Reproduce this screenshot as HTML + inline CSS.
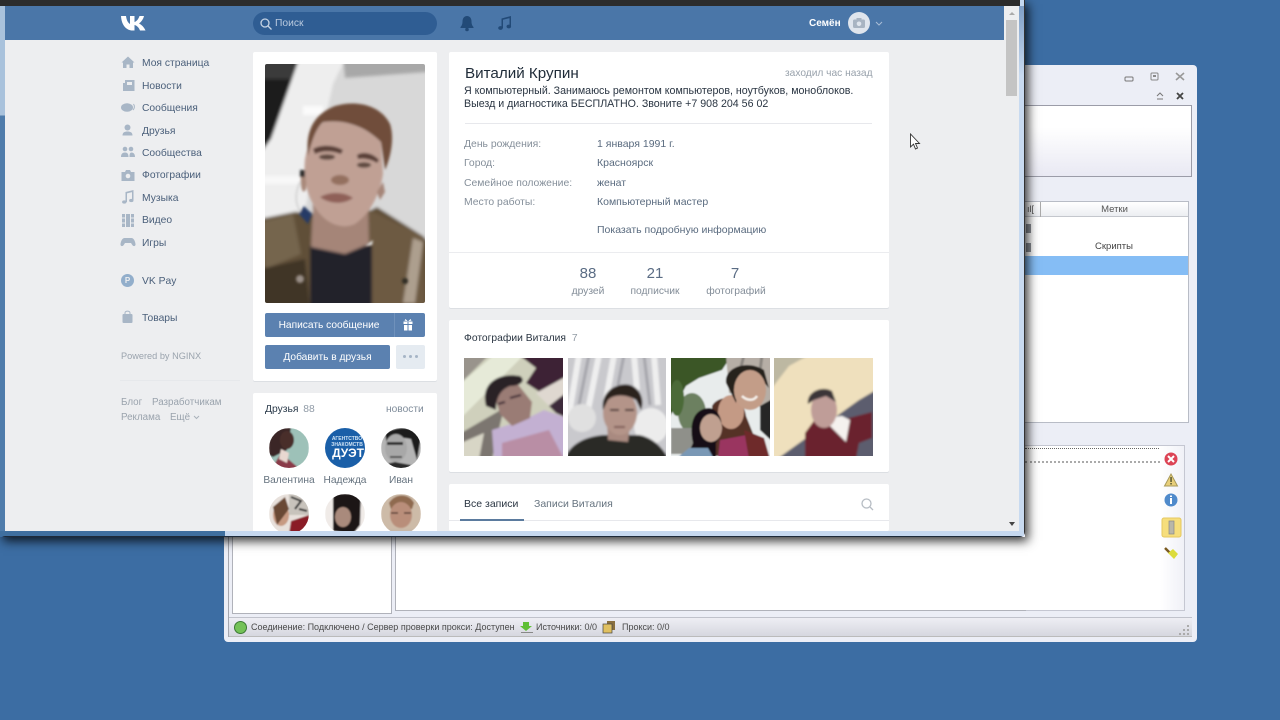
<!DOCTYPE html>
<html><head><meta charset="utf-8">
<style>
html,body{margin:0;padding:0;width:1280px;height:720px;overflow:hidden;background:#3c6da3;font-family:"Liberation Sans","Noto Sans CJK SC",sans-serif}
div,span,svg{position:absolute;white-space:nowrap;box-sizing:border-box}
.t{font-size:10.65px;line-height:14px}
.nav{left:142px;color:#4a5f7a;font-size:10.3px;line-height:14px}
.lab{left:464px;color:#858f9a;font-size:10.4px;line-height:14px}
.val{left:597px;color:#5a6b7f;font-size:10.5px;line-height:14px}
.card{background:#fff;border-radius:2px;box-shadow:0 1px 0 #dcdfe3}
.fn{color:#66737f;font-size:10.2px;line-height:14px;text-align:center}
.cnt{color:#5a6c84;font-size:15px;line-height:18px;text-align:center}
.cl{color:#838d98;font-size:10.3px;line-height:14px;text-align:center}
.g{color:#9aa3ad;font-size:9.8px;line-height:13px}
.s{font-size:9px;line-height:14px;color:#4a4a4a}
</style></head><body>

<!-- back window -->
<div style="left:224px;top:65px;width:973px;height:577px;background:#eceef6;border-radius:4px"></div>
<div style="left:1025px;top:105px;width:167px;height:72px;background:linear-gradient(#fff,#fff 30%,#e9e9f3);border:1px solid #9b9ca8;border-left:0"></div>
<div style="left:1025px;top:201px;width:164px;height:222px;background:#fff;border:1px solid #b8bcc6;border-left:0"></div>
<div style="left:1025px;top:202px;width:163px;height:15px;background:linear-gradient(#fff,#eceef2);border-bottom:1px solid #c4c7cd"></div>
<div style="left:1040px;top:202px;width:1px;height:15px;background:#aaa"></div>
<div style="left:1027px;top:204px;width:10px;height:10px;color:#555;font-size:9px;line-height:10px">ıl[</div>
<div style="left:1041px;top:203px;width:147px;height:15px;text-align:center;color:#555;font-size:9.5px;line-height:14px">Метки</div>
<div style="left:1026px;top:224px;width:5px;height:9px;background:#8b8f96"></div>
<div style="left:1026px;top:243px;width:5px;height:9px;background:#8b8f96"></div>
<div style="left:1040px;top:240px;width:148px;height:13px;text-align:center;color:#444;font-size:9.5px;line-height:13px">Скрипты</div>
<div style="left:1025px;top:256px;width:163px;height:19px;background:#85bdf5"></div>
<svg style="left:1120px;top:68px" width="70" height="36" viewBox="0 0 70 36" fill="none">
<rect x="5" y="9" width="8" height="4" rx="1" stroke="#777"/>
<rect x="31" y="5" width="7" height="7" rx="1" stroke="#888"/><rect x="33" y="7" width="3" height="2" fill="#888"/>
<path d="M56 5l8 7M64 5l-8 7" stroke="#999" stroke-width="1.6"/>
<path d="M37 28l3-3 3 3M37 31h6" stroke="#777"/>
<path d="M57 25l6 6M63 25l-6 6" stroke="#444" stroke-width="1.8"/>
</svg>

<!-- lower panels -->
<div style="left:1025px;top:445px;width:160px;height:166px;background:#fff;border:1px solid #c5c7d2;border-left:0"></div>
<div style="left:1025px;top:448px;width:134px;height:1px;border-top:1px dotted #666"></div>
<div style="left:1025px;top:461px;width:135px;height:2px;border-top:2px dotted #aaa"></div>
<div style="left:1160px;top:446px;width:24px;height:164px;background:linear-gradient(90deg,#fff,#f0f1f7)"></div>
<svg style="left:1158px;top:448px" width="28" height="120" viewBox="0 0 28 120">
<circle cx="13" cy="11" r="6.5" fill="#dc4455"/><path d="M10 8l6 6M16 8l-6 6" stroke="#fff" stroke-width="2"/>
<path d="M13 26l6.5 12h-13z" fill="#e8cf7a" stroke="#a89a5a"/><rect x="12.300" y="29" width="1.5" height="5" fill="#553"/><rect x="12.300" y="35" width="1.5" height="1.5" fill="#553"/>
<circle cx="13" cy="52" r="6.5" fill="#4f8acb"/><rect x="12" y="50" width="2" height="6" fill="#fff"/><rect x="12" y="47.5" width="2" height="1.5" fill="#fff"/>
<rect x="4" y="70" width="19" height="19" rx="2" fill="#f6de7c" stroke="#e5c860"/><rect x="11" y="73" width="5" height="13" fill="#b9b7a9" stroke="#888" stroke-width=".7"/>
<path d="M7 100l5 5" stroke="#7a5a20" stroke-width="2.5"/><path d="M10 105l5-4 5 5-4 5z" fill="#dcdc3c"/>
</svg>
<div style="left:232px;top:537px;width:160px;height:77px;background:#fff;border:1px solid #b0b2ba;border-top:0"></div>
<div style="left:395px;top:537px;width:631px;height:74px;background:#fff;border-left:1px solid #b0b2ba;border-bottom:1px solid #b0b2ba"></div>
<!-- status bar -->
<div style="left:228px;top:617px;width:964px;height:20px;background:linear-gradient(#eeeef4,#d6d7df);border-top:1px solid #c0c2cb;border-bottom:1px solid #bbb"></div>
<div style="left:228px;top:537px;width:1px;height:100px;background:#a5a7af"></div>
<svg style="left:233px;top:620px" width="390" height="15" viewBox="0 0 390 15">
<circle cx="7.5" cy="7.5" r="6" fill="#74c257" stroke="#3d7a35"/>
<path d="M290 2h6v4h3l-6 5-6-5h3z" fill="#5fbf35"/><rect x="288" y="12" width="12" height="1" fill="#888"/>
<rect x="378" y="1" width="8" height="9" fill="#8a7040" transform="translate(-4 0)"/><rect x="374" y="4" width="9" height="9" fill="#e0c060" stroke="#444" stroke-width=".7" transform="translate(-4 0)"/>
</svg>
<svg style="left:1178px;top:624px" width="13" height="12" viewBox="0 0 13 12" fill="#aaa"><rect x="9" y="1" width="2" height="2"/><rect x="9" y="5" width="2" height="2"/><rect x="9" y="9" width="2" height="2"/><rect x="5" y="5" width="2" height="2"/><rect x="5" y="9" width="2" height="2"/><rect x="1" y="9" width="2" height="2"/></svg>
<div class="s" style="left:251px;top:620px">Соединение: Подключено / Сервер проверки прокси: Доступен</div>
<div class="s" style="left:536px;top:620px">Источники: 0/0</div>
<div class="s" style="left:622px;top:620px">Прокси: 0/0</div>

<!-- front window shadow -->
<div style="left:0;top:0;width:1025px;height:537px;box-shadow:3px 4px 10px rgba(0,0,0,.8)"></div>

<!-- front window frame -->
<div style="left:0;top:0;width:1025px;height:537px;background:#c5d9f1;border-radius:0 0 5px 5px;border-bottom:1px solid #1d2a3a;border-right:1px solid #333"></div>
<div style="left:0;top:0;width:5px;height:531px;background:linear-gradient(#a9c2dc,#a9c2dc 115px,#4f7cab 116px)"></div>
<div style="left:0;top:531px;width:225px;height:5px;background:#3f6f9f"></div>
<div style="left:225px;top:531px;width:799px;height:5px;background:#c6d8ef"></div>
<div style="left:0;top:0;width:1020px;height:6px;background:#2c2c2c"></div>

<!-- page -->
<div style="left:5px;top:6px;width:1014px;height:525px;background:#edeef0"></div>
<div style="left:5px;top:6px;width:999px;height:34px;background:#4a76a8"></div>
<!-- scrollbar -->
<div style="left:1006px;top:20px;width:11px;height:76px;background:#c4c4c4"></div>
<svg style="left:1006px;top:9px" width="11" height="520" viewBox="0 0 11 520"><path d="M3 6l3-3 3 3z" fill="#aaa"/><path d="M3 513h6l-3 4z" fill="#444"/></svg>
<div style="left:1019px;top:6px;width:5px;height:525px;background:linear-gradient(#7f9fc6,#c8daf0 70px)"></div>

<!-- header -->
<svg style="left:120px;top:15px" width="28" height="16" viewBox="0 0 28 16"><path d="M1 1h5c.5 4 2 7 4 8V1h4.500v6c2-.5 4-3 5-6H24c-.8 3.500-3 6-5 7.500 2.500 1.200 5 3.500 6.500 7H20c-1-2.800-3.200-5-5.500-5.500V15.500H13C6 15.500 1.500 10 1 1z" fill="#fff"/></svg>
<div style="left:253px;top:12px;width:184px;height:23px;border-radius:12px;background:#2f5d93"></div>
<svg style="left:259px;top:17px" width="14" height="14" viewBox="0 0 14 14" fill="none"><circle cx="6" cy="6" r="4" stroke="#c5d3e4" stroke-width="1.3"/><path d="M9 9l3.500 3.500" stroke="#c5d3e4" stroke-width="1.3"/></svg>
<div class="t" style="left:275px;top:17px;color:#b9cadf;font-size:10.3px">Поиск</div>
<svg style="left:458px;top:14px" width="18" height="18" viewBox="0 0 18 18"><path d="M9 2c3 0 4.500 2.500 4.500 5.500 0 3 1 4.500 2 5.500v1H2.500v-1c1-1 2-2.500 2-5.500C4.500 4.500 6 2 9 2z" fill="#224a77"/><circle cx="9" cy="15.500" r="1.800" fill="#224a77"/></svg>
<svg style="left:496px;top:14px" width="18" height="18" viewBox="0 0 18 18" fill="#224a77"><path d="M5.500 4.500L15 2v1.800l-8 2V14H5.500zM13.500 3h1.500v9.500h-1.500z"/><ellipse cx="4.500" cy="14" rx="2.300" ry="1.900"/><ellipse cx="12.800" cy="12.500" rx="2.300" ry="1.900"/></svg>
<div class="t" style="left:809px;top:17px;color:#fff;font-weight:bold;font-size:10px">Семён</div>
<div style="left:848px;top:12px;width:22px;height:22px;border-radius:50%;background:#dfe5ed"></div>
<svg style="left:852px;top:17px" width="14" height="12" viewBox="0 0 14 12"><rect x="1" y="2.500" width="12" height="8.500" rx="1.500" fill="#a8b4c2"/><rect x="4.500" y="1" width="5" height="2" fill="#a8b4c2"/><circle cx="7" cy="6.800" r="2.300" fill="#dfe5ed"/></svg>
<svg style="left:875px;top:21px" width="8" height="6" viewBox="0 0 8 6" fill="none"><path d="M1 1l3 3 3-3" stroke="#a9bdd6"/></svg>

<!-- sidebar -->
<svg style="left:120px;top:55px" width="16" height="200" viewBox="0 0 16 200" fill="#a8b6c6">
<path d="M8 1.500L14.500 7.500H13V13H9.500V9.500h-3V13H3V7.500H1.500z"/>
<path d="M5 25h9.500v11H3v-8h2z"/><rect x="7" y="27" width="5" height="3" fill="#edeef0"/>
<ellipse cx="7" cy="52.500" rx="6" ry="4.300"/><path d="M13.500 49c1.500 2 1 4.500-.5 6" fill="none" stroke="#a8b6c6"/>
<circle cx="7.500" cy="72.500" r="3"/><path d="M2.500 80.500c0-3 2-4 5-4s5 1 5 4z"/>
<circle cx="5" cy="94" r="2.300"/><circle cx="11" cy="94" r="2.300"/><path d="M1 102c0-3 1.500-4.500 4-4.500s3.500 1.500 3.500 4.500zM9.500 102c0-3 .5-4.500 2-4.500 2 0 3.500 1.500 3.500 4.500z"/>
<path d="M1.500 117h3.500l1-2h4l1 2h3.500v9h-13z"/><circle cx="8" cy="121" r="2.300" fill="#edeef0"/>
<path d="M5.500 137l8-2v1.800l-6.500 1.600V147H5.500zM12 136h1.500v9H12z"/><ellipse cx="4.300" cy="147" rx="2.200" ry="1.600"/><ellipse cx="11.300" cy="145.500" rx="2.200" ry="1.600"/>
<path d="M2 159h12v13H2z"/><path d="M5.500 159v13M10.500 159v13M2 163h3.500M2 168h3.500M10.500 163H14M10.500 168H14" stroke="#edeef0" fill="none"/>
<path d="M4.500 183h7c2 0 3.500 2.500 4 6 .3 2-1.800 3-3.200 1l-1.300-2H5l-1.300 2c-1.400 2-3.500 1-3.200-1 .5-3.500 2-6 4-6z"/>
</svg>
<div class="nav" style="top:57px">Моя страница</div>
<div class="nav" style="top:80px">Новости</div>
<div class="nav" style="top:102px">Сообщения</div>
<div class="nav" style="top:125px">Друзья</div>
<div class="nav" style="top:147px">Сообщества</div>
<div class="nav" style="top:169px">Фотографии</div>
<div class="nav" style="top:192px">Музыка</div>
<div class="nav" style="top:214px">Видео</div>
<div class="nav" style="top:237px">Игры</div>
<div style="left:121px;top:274px;width:13px;height:13px;border-radius:50%;background:#92aecb;color:#edeef0;font-size:8px;line-height:13px;text-align:center;font-weight:bold">P</div>
<div class="nav" style="top:275px">VK Pay</div>
<svg style="left:121px;top:310px" width="13" height="14" viewBox="0 0 13 14" fill="#a8b6c6"><rect x="1.500" y="4" width="10" height="9" rx="1"/><path d="M4 5V3c0-2.500 5-2.500 5 0v2" fill="none" stroke="#a8b6c6"/></svg>
<div class="nav" style="top:312px">Товары</div>
<div class="g" style="left:121px;top:350px;font-size:9.2px">Powered by NGINX</div>
<div style="left:120px;top:380px;width:120px;height:1px;background:#e6e8eb"></div>
<div class="g" style="left:121px;top:396px">Блог</div>
<div class="g" style="left:152px;top:396px">Разработчикам</div>
<div class="g" style="left:121px;top:411px">Реклама</div>
<div class="g" style="left:170px;top:411px">Ещё</div>
<svg style="left:193px;top:415px" width="7" height="5" viewBox="0 0 7 5" fill="none"><path d="M1 1l2.500 2.500L6 1" stroke="#aab2bb"/></svg>

<!-- profile card -->
<div class="card" style="left:253px;top:52px;width:184px;height:329px"></div>
<svg style="left:265px;top:64px;border-radius:2px" width="160" height="239" viewBox="0 0 160 239">
<defs><filter id="b1" x="-20%" y="-20%" width="140%" height="140%"><feGaussianBlur stdDeviation="1.5"/></filter><filter id="b2" x="-20%" y="-20%" width="140%" height="140%"><feGaussianBlur stdDeviation=".9"/></filter><filter id="b4" x="-20%" y="-20%" width="140%" height="140%"><feGaussianBlur stdDeviation="1.3"/></filter></defs>
<g filter="url(#b1)">
<rect x="-5" y="-5" width="170" height="250" fill="#d8d8d8"/>
<path d="M-5-5H34L28 18H-5z" fill="#3a3a3a"/><path d="M-5 15H30L6 75-5 90z" fill="#1c1c1c"/>
<path d="M34-5H80L68 20 40 145-5 155V90L6 75z" fill="#eeeeee"/>
<path d="M78-5H165V8L80 14z" fill="#a8a8a8"/>
<rect x="38" y="42" width="20" height="9" fill="#fbfbfb"/>
<rect x="-5" y="112" width="42" height="8" fill="#f8f8f8"/>
<path d="M-5 155L30 148 50 150 102 148 112 143 158 172 165 180V245H-5z" fill="#614f39"/>
<path d="M102 145L158 172 160 245H106z" fill="#6d5a43"/>
<path d="M-5 158L28 150 36 190 0 205z" fill="#75654e"/>
<path d="M-5 205L40 195 45 245H-5z" fill="#3f3428"/>
<path d="M45 181H107V245H45z" fill="#20202a"/>
<path d="M148 174L158 178 150 239H138z" fill="#ad9f8e"/>
<path d="M48 140L46 183 80 190 104 180 103 140z" fill="#a58578"/>
</g>
<g filter="url(#b4)">
<path d="M40 95C38 115 42 135 55 150 65 162 80 165 90 160 105 150 115 130 118 110L116 78C100 62 80 55 58 58 48 68 43 80 40 95z" fill="#c0a094"/>
<path d="M43 92C40 65 50 50 70 42 90 36 115 40 125 60 130 75 125 95 120 106L116 78C100 62 80 55 58 58 50 65 46 80 43 92z" fill="#6f4d3a"/>
<path d="M48 85C56 80 70 81 78 86L76 90C66 86 56 87 50 90z" fill="#5a4039"/>
<path d="M92 91C98 87 108 89 114 96L112 99C106 95 98 94 93 95z" fill="#5a4039"/>
<ellipse cx="62" cy="93" rx="8" ry="2.800" fill="#5f4840"/><ellipse cx="99" cy="101" rx="7" ry="2.800" fill="#5f4840"/>
<ellipse cx="75" cy="116" rx="9" ry="5" fill="#94705f"/>
<path d="M55 133C66 127 80 128 88 134 78 141 64 140 55 133z" fill="#8f6058"/>
<path d="M112 128l6-10 2 10-5 8z" fill="#a58578"/>
<path d="M36 112C38 108 42 110 41 125 38 132 35 124 36 112z" fill="#a88879"/><rect x="35" y="106" width="5" height="7" fill="#2a2a2a"/>
<path d="M35 118C28 133 32 143 36 148" stroke="#cfcfcf" stroke-width="1.5" fill="none"/>
<path d="M34 150l5-8 8 8-4 10z" fill="#273b66"/>
<path d="M100 182l8-6-1 5z" fill="#e8e8e8"/>
<circle cx="35" cy="215" r="4" fill="#9a8f88"/><circle cx="140" cy="217" r="3" fill="#2d2a24"/>
</g>
</svg>
<div style="left:265px;top:313px;width:160px;height:24px;background:#5b81b0;border-radius:2px"></div>
<div style="left:394px;top:313px;width:1px;height:24px;background:#6f91bb"></div>
<div class="t" style="left:265px;top:319px;width:128px;text-align:center;color:#fff;font-size:10.2px">Написать сообщение</div>
<svg style="left:402px;top:318px" width="12" height="14" viewBox="0 0 12 14" fill="#fff"><rect x="1.500" y="3.500" width="9" height="2.500"/><rect x="2" y="7" width="8" height="5.500"/><rect x="5.500" y="3.500" width="1" height="9" fill="#5b81b0"/><path d="M6 3.500L3.500 1 2.500 2.500zM6 3.500L8.500 1l1 1.500z"/></svg>
<div style="left:265px;top:345px;width:125px;height:24px;background:#5b81b0;border-radius:2px"></div>
<div class="t" style="left:265px;top:351px;width:125px;text-align:center;color:#fff;font-size:10.2px">Добавить в друзья</div>
<div style="left:396px;top:345px;width:29px;height:24px;background:#e5ebf1;border-radius:2px"></div>
<svg style="left:402px;top:354px" width="17" height="5" viewBox="0 0 17 5" fill="#a6b5c6"><circle cx="2.500" cy="2.500" r="1.500"/><circle cx="8.500" cy="2.500" r="1.500"/><circle cx="14.500" cy="2.500" r="1.500"/></svg>

<!-- friends card -->
<div class="card" style="left:253px;top:393px;width:184px;height:138px;border-radius:2px 2px 0 0;box-shadow:none"></div>
<div class="t" style="left:265px;top:403px;color:#2a3a4a;font-size:10.3px">Друзья <span style="position:static;color:#8f9aa6;margin-left:2px">88</span></div>
<div class="t" style="left:386px;top:403px;color:#7f8c9a;font-size:10.2px">новости</div>
<svg style="left:265px;top:425px" width="160" height="106" viewBox="0 0 160 106">
<defs><clipPath id="c1"><circle cx="24" cy="23" r="20"/></clipPath><clipPath id="c2"><circle cx="80" cy="23" r="20"/></clipPath><clipPath id="c3"><circle cx="136" cy="23" r="20"/></clipPath><clipPath id="c4"><circle cx="24" cy="89" r="20"/></clipPath><clipPath id="c5"><circle cx="80" cy="89" r="20"/></clipPath><clipPath id="c6"><circle cx="136" cy="89" r="20"/></clipPath></defs>
<g clip-path="url(#c1)"><g filter="url(#b2)"><rect x="4" y="3" width="40" height="40" fill="#9dc1b8"/><path d="M4 3H26L22 25 8 32 4 30z" fill="#3a2526"/><path d="M16 28L36 45H6z" fill="#8a3a48"/><ellipse cx="22" cy="15" rx="7" ry="9" fill="#4a2d2a"/><path d="M16 24l8 4-2 10-8-4z" fill="#e8d8d0"/></g></g>
<g clip-path="url(#c2)"><rect x="60" y="3" width="40" height="40" fill="#1a5fa8"/><text x="82" y="15" font-size="5" font-weight="bold" fill="#cfe3f5" text-anchor="middle" font-family="Liberation Sans">АГЕНТСТВО</text><text x="82" y="21" font-size="5" font-weight="bold" fill="#cfe3f5" text-anchor="middle" font-family="Liberation Sans">ЗНАКОМСТВ</text><text x="83" y="32" font-size="12" font-weight="bold" fill="#fff" text-anchor="middle" font-family="Liberation Sans">ДУЭТ</text></g>
<g clip-path="url(#c3)"><g filter="url(#b2)"><rect x="116" y="3" width="40" height="40" fill="#b5b5b5"/><path d="M120 8C135 0 150 2 156 12L152 35 146 14C135 12 128 12 122 20z" fill="#1e1e1e"/><ellipse cx="131" cy="23" rx="11" ry="14" fill="#a8a8a8"/><path d="M122 17H138V20H122z" fill="#333"/><path d="M125 32h12" stroke="#555" stroke-width="2"/><path d="M116 40L130 37 146 40 150 48H116z" fill="#2c2c2c"/></g></g>
<g clip-path="url(#c4)"><g filter="url(#b2)"><rect x="4" y="69" width="40" height="40" fill="#e8e1dc"/><path d="M24 69H44V90H24z" fill="#c8c3bc"/><path d="M26 72l10 4-6 8M34 84l8 2" stroke="#333" stroke-width="2" fill="none"/><ellipse cx="16" cy="90" rx="8" ry="11" fill="#c79a82"/><path d="M8 82L20 72 24 84 12 100z" fill="#6a4a34"/><path d="M26 96L44 90V109H24z" fill="#8a1d28"/></g></g>
<g clip-path="url(#c5)"><g filter="url(#b2)"><rect x="60" y="69" width="40" height="40" fill="#f0ebe8"/><path d="M68 69H96L95 100 88 109 68 106z" fill="#1e1616"/><ellipse cx="78" cy="92" rx="8" ry="10" fill="#a98a7c"/></g></g>
<g clip-path="url(#c6)"><g filter="url(#b2)"><rect x="116" y="69" width="40" height="40" fill="#cdbba8"/><path d="M124 78C130 68 144 68 149 78L147 84H126z" fill="#8f6b50"/><ellipse cx="136" cy="90" rx="11" ry="13" fill="#b98e7a"/><path d="M126 88H133M139 88H146" stroke="#5a4035" stroke-width="1.5"/><path d="M120 104h32v6h-32z" fill="#c8b8a8"/></g></g>
</svg>
<div class="fn" style="left:259px;top:474px;width:60px">Валентина</div>
<div class="fn" style="left:315px;top:474px;width:60px">Надежда</div>
<div class="fn" style="left:371px;top:474px;width:60px">Иван</div>

<!-- info card -->
<div class="card" style="left:449px;top:52px;width:440px;height:256px"></div>
<div style="left:465px;top:65px;color:#1f2b38;font-size:15.2px;line-height:17px">Виталий Крупин</div>
<div class="t" style="left:785px;top:67px;color:#98a1ab;font-size:10.2px">заходил час назад</div>
<div class="t" style="left:464px;top:84px;color:#2a3542">Я компьютерный. Занимаюсь ремонтом компьютеров, ноутбуков, моноблоков.</div>
<div class="t" style="left:464px;top:97px;color:#2a3542">Выезд и диагностика БЕСПЛАТНО. Звоните +7 908 204 56 02</div>
<div style="left:465px;top:123px;width:407px;height:1px;background:#e7e8ec"></div>
<div class="lab" style="top:138px">День рождения:</div>
<div class="val" style="top:137px">1 января 1991 г.</div>
<div class="lab" style="top:157px">Город:</div>
<div class="val" style="top:156px">Красноярск</div>
<div class="lab" style="top:177px">Семейное положение:</div>
<div class="val" style="top:176px">женат</div>
<div class="lab" style="top:196px">Место работы:</div>
<div class="val" style="top:195px">Компьютерный мастер</div>
<div class="val" style="top:223px">Показать подробную информацию</div>
<div style="left:449px;top:252px;width:440px;height:1px;background:#ebecef"></div>
<div class="cnt" style="left:558px;top:265px;width:60px">88</div>
<div class="cl" style="left:558px;top:285px;width:60px">друзей</div>
<div class="cnt" style="left:625px;top:265px;width:60px">21</div>
<div class="cl" style="left:625px;top:285px;width:60px">подписчик</div>
<div class="cnt" style="left:695px;top:265px;width:80px">7</div>
<div class="cl" style="left:696px;top:285px;width:80px">фотографий</div>

<!-- photos card -->
<div class="card" style="left:449px;top:320px;width:440px;height:152px"></div>
<div class="t" style="left:464px;top:332px;color:#2a3542;font-size:10.3px">Фотографии Виталия <span style="position:static;color:#939ca6;margin-left:3px">7</span></div>
<svg style="left:464px;top:358px" width="409" height="98" viewBox="0 0 409 98">
<defs><filter id="b3" x="-10%" y="-10%" width="120%" height="120%"><feGaussianBlur stdDeviation="1"/></filter><clipPath id="p1"><rect width="99" height="98"/></clipPath><clipPath id="p2"><rect x="104" width="98" height="98"/></clipPath><clipPath id="p3"><rect x="207" width="99" height="98"/></clipPath><clipPath id="p4"><rect x="310" width="99" height="98"/></clipPath></defs>
<g clip-path="url(#p1)"><g filter="url(#b3)">
<rect x="-3" y="-3" width="106" height="104" fill="#cfd0bc"/>
<path d="M-3-3H25L-3 25z" fill="#99948c"/><path d="M30-3H60L-3 60V25z" fill="#e6ead8"/>
<path d="M55-3H103V22L85 40 62 25 72 10z" fill="#3d2234"/><path d="M72 35L103 18V34L85 48z" fill="#dfd8d0"/><path d="M85 48L103 34V60L92 55z" fill="#3d2a3a"/>
<path d="M-3 75L40 50 28 101H-3z" fill="#7c7670"/><path d="M-3 85L20 75 15 101H-3z" fill="#d8d6c6"/>
<path d="M28 72L60 62 80 52 103 60V101H30z" fill="#c3b0d2"/><path d="M38 85L85 72 100 101H38z" fill="#b98ea5"/>
<path d="M29 32L52 24 68 44 66 60 48 68 36 56z" fill="#9a7b75"/>
<path d="M22 48C16 25 35 14 56 18 62 22 58 28 46 28 36 32 32 40 32 52z" fill="#2c2028"/>
<path d="M46 40l11-3M34 46l7-2" stroke="#3a2832" stroke-width="2.2"/>
</g></g>
<g clip-path="url(#p2)"><g filter="url(#b3)">
<rect x="100" y="-3" width="106" height="104" fill="#c9c9cd"/>
<path d="M115-3l-10 60M135-3l-14 70M150-3l-8 45M170-3l3 35M190-3l4 50" stroke="#efefef" stroke-width="6" fill="none"/>
<path d="M125-3l-12 60M160-3l-6 30M180-3l6 50" stroke="#a5a5ab" stroke-width="3" fill="none"/>
<ellipse cx="187" cy="68" rx="17" ry="18" fill="#ececec"/><ellipse cx="118" cy="60" rx="14" ry="14" fill="#e0e0e0"/>
<path d="M102 98C108 84 125 78 140 77H175C190 80 198 90 203 98V101H102z" fill="#2c2a28"/>
<path d="M143 66L144 82 164 84 166 66z" fill="#a98a80"/>
<ellipse cx="156" cy="55" rx="17" ry="22" fill="#b49489"/><path d="M139 52C136 32 155 24 166 27 176 30 181 42 177 52L172 42C162 36 150 36 144 42z" fill="#2b201d"/>
<path d="M146 52h9M161 52h9" stroke="#4a3530" stroke-width="2"/><path d="M150 69h11" stroke="#7d5a54" stroke-width="2"/>
</g></g>
<g clip-path="url(#p3)"><g filter="url(#b2)">
<rect x="205" y="-3" width="104" height="104" fill="#e8ecec"/>
<path d="M205-3H268L258 12 235 20 222 28 205 60z" fill="#3b5626"/><path d="M262-3H310V60L285 40 265 35z" fill="#b6aea6"/><path d="M280-3l-4 16M298-3l-2 16" stroke="#8a8580" stroke-width="3"/>
<ellipse cx="228" cy="55" rx="14" ry="20" fill="#6c8060"/><ellipse cx="213" cy="40" rx="7" ry="18" fill="#4c6a38"/>
<rect x="207" y="70" width="24" height="26" fill="#8f908a"/>
<path d="M248 48C255 35 280 38 282 58L298 98H250z" fill="#553026"/>
<ellipse cx="267" cy="54" rx="13" ry="17" fill="#c49a85"/>
<path d="M262 25C260 8 285 2 300 12L305 30 296 20 275 25 272 45z" fill="#26211e"/><ellipse cx="286" cy="32" rx="16" ry="20" fill="#c39d88"/><path d="M278 38c5 5 12 5 15 0" stroke="#f4eee8" stroke-width="2.5" fill="none"/><path d="M296 48L310 40V85L296 72z" fill="#272725"/>
<path d="M229 85C224 62 232 50 246 50 258 53 262 70 252 85L252 101H222z" fill="#131012"/><ellipse cx="247" cy="70" rx="11" ry="14" fill="#c0a090"/>
<path d="M212 101L225 90H244L250 101z" fill="#7a98b5"/><path d="M256 82L288 76 292 101H254z" fill="#9a3560"/><path d="M280 72L300 80 306 101H285z" fill="#6e2a2c"/>
</g></g>
<g clip-path="url(#p4)"><g filter="url(#b3)">
<rect x="308" y="-3" width="104" height="104" fill="#efe0bd"/>
<path d="M308-3H345L325 8 308 30z" fill="#bdb8a2"/>
<path d="M313 101L395 42 412 32V101z" fill="#5c5d6e"/>
<path d="M341 98V75L352 60 370 68 385 60 408 54V80L395 85 392 101H341z" fill="#6a202e"/>
<path d="M360 60L364 66 382 84 386 62 378 58z" fill="#f5f2ee"/>
<ellipse cx="360" cy="52" rx="13" ry="18" fill="#bf9d98"/><path d="M344 46C342 34 358 27 368 33L372 44 362 38 350 42z" fill="#3a3438"/>
</g></g>
</svg>

<!-- wall card -->
<div class="card" style="left:449px;top:484px;width:440px;height:47px;box-shadow:none"></div>
<div class="t" style="left:464px;top:497px;color:#2a3542;font-size:10.5px">Все записи</div>
<div class="t" style="left:534px;top:497px;color:#66737f;font-size:10.5px">Записи Виталия</div>
<div style="left:449px;top:520px;width:440px;height:1px;background:#e7e8ec"></div>
<div style="left:460px;top:519px;width:64px;height:2px;background:#5b7b9e"></div>
<svg style="left:860px;top:497px" width="14" height="14" viewBox="0 0 14 14" fill="none"><circle cx="6.500" cy="6.500" r="4.500" stroke="#b6bcc3" stroke-width="1.3"/><path d="M10 10l3 3" stroke="#b6bcc3" stroke-width="1.3"/></svg>

<!-- cursor -->
<svg style="left:909px;top:133px" width="12" height="18" viewBox="0 0 12 18"><path d="M1.500 1v13l3-2.800 2 4.800 2-1-2-4.500h4z" fill="#fff" stroke="#333" stroke-width=".9"/></svg>

</body></html>
